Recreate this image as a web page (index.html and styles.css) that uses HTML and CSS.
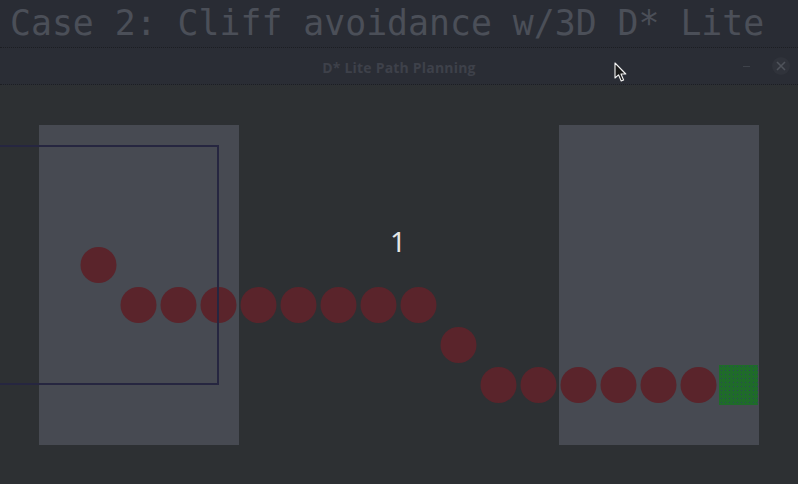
FILE: index.html
```html
<!DOCTYPE html>
<html>
<head>
<meta charset="utf-8">
<link rel="stylesheet" href="styles.css">
</head>
<body>
<div class="screen">
  <div class="caption">Case 2: Cliff avoidance w/3D D* Lite</div>
  <div class="titlebar">
    <span class="wtitle">D* Lite Path Planning</span>
    <span class="minbtn"></span>
    <span class="closebtn">
      <svg width="18" height="18" viewBox="0 0 18 18"><path d="M5 5 L13 13 M13 5 L5 13" stroke="#4f535b" stroke-width="1.6"/></svg>
    </span>
    <svg class="cursor" width="14" height="21" viewBox="0 0 14 21">
      <path d="M1 1 L1 16 L4.5 12.8 L7.2 19 L9.6 18 L7 12 L11.8 12 Z" fill="#1a1a1a" stroke="#f2f2f2" stroke-width="1.1" stroke-linejoin="round"/>
    </svg>
  </div>
  <div class="canvas">
    <svg width="798" height="399" viewBox="0 0 798 399">
      <defs>
        <pattern id="dots" width="4" height="4" patternUnits="userSpaceOnUse">
          <rect width="4" height="4" fill="#1f6b2a"/>
          <rect x="1" y="1" width="1" height="1" fill="#2a4a55"/>
        </pattern>
      </defs>
      <rect x="39" y="40" width="200" height="320" fill="#474a52"/>
      <rect x="559" y="40" width="200" height="320" fill="#474a52"/>
      <g fill="#5a242b">
        <circle cx="98.5" cy="180" r="18"/>
        <circle cx="138.5" cy="220" r="18"/>
        <circle cx="178.5" cy="220" r="18"/>
        <circle cx="218.5" cy="220" r="18"/>
        <circle cx="258.5" cy="220" r="18"/>
        <circle cx="298.5" cy="220" r="18"/>
        <circle cx="338.5" cy="220" r="18"/>
        <circle cx="378.5" cy="220" r="18"/>
        <circle cx="418.5" cy="220" r="18"/>
        <circle cx="458.5" cy="260" r="18"/>
        <circle cx="498.5" cy="300" r="18"/>
        <circle cx="538.5" cy="300" r="18"/>
        <circle cx="578.5" cy="300" r="18"/>
        <circle cx="618.5" cy="300" r="18"/>
        <circle cx="658.5" cy="300" r="18"/>
        <circle cx="698.5" cy="300" r="18"/>
      </g>
      <rect x="719" y="280" width="39" height="40" fill="url(#dots)"/>
      <rect x="-10" y="61" width="228" height="238" fill="none" stroke="#262640" stroke-width="2"/>
      <text x="398" y="167" class="step">1</text>
    </svg>
  </div>
</div>
</body>
</html>
```

FILE: styles.css
```css
html, body {
  margin: 0;
  padding: 0;
  background: #2d3033;
}
.screen {
  width: 798px;
  height: 484px;
  overflow: hidden;
  display: flex;
  flex-direction: column;
  background: #2d3033;
}
.caption {
  box-sizing: border-box;
  height: 48px;
  border-bottom: 1px dotted #1c1e23;
  background: #292c34;
  color: #4b4f58;
  font-family: "DejaVu Sans Mono", monospace;
  font-size: 34.8px;
  line-height: 47px;
  padding-left: 10px;
  white-space: nowrap;
}
.titlebar {
  position: relative;
  height: 37px;
  box-sizing: border-box;
  border-bottom: 1px dotted #1c1e23;
  background: #2a2d35;
  display: flex;
  align-items: center;
  justify-content: center;
}
.wtitle {
  font-family: "Open Sans", "Noto Sans", sans-serif;
  font-weight: 700;
  font-size: 14px;
  color: #3e414a;
  letter-spacing: 0.2px;
  margin-top: 2px;
}
.minbtn {
  position: absolute;
  left: 743px;
  top: 18px;
  width: 7px;
  height: 1px;
  background: #3e424a;
}
.closebtn {
  position: absolute;
  left: 772px;
  top: 9px;
  width: 18px;
  height: 18px;
  border-radius: 50%;
  background: #30333b;
  display: flex;
}
.cursor {
  position: absolute;
  left: 614px;
  top: 14px;
}
.canvas {
  flex: 1;
  background: #2d3033;
}
.canvas svg {
  display: block;
}
.step {
  font-family: "Noto Sans", sans-serif;
  font-size: 28px;
  fill: #e6e6e6;
  text-anchor: middle;
}
```
